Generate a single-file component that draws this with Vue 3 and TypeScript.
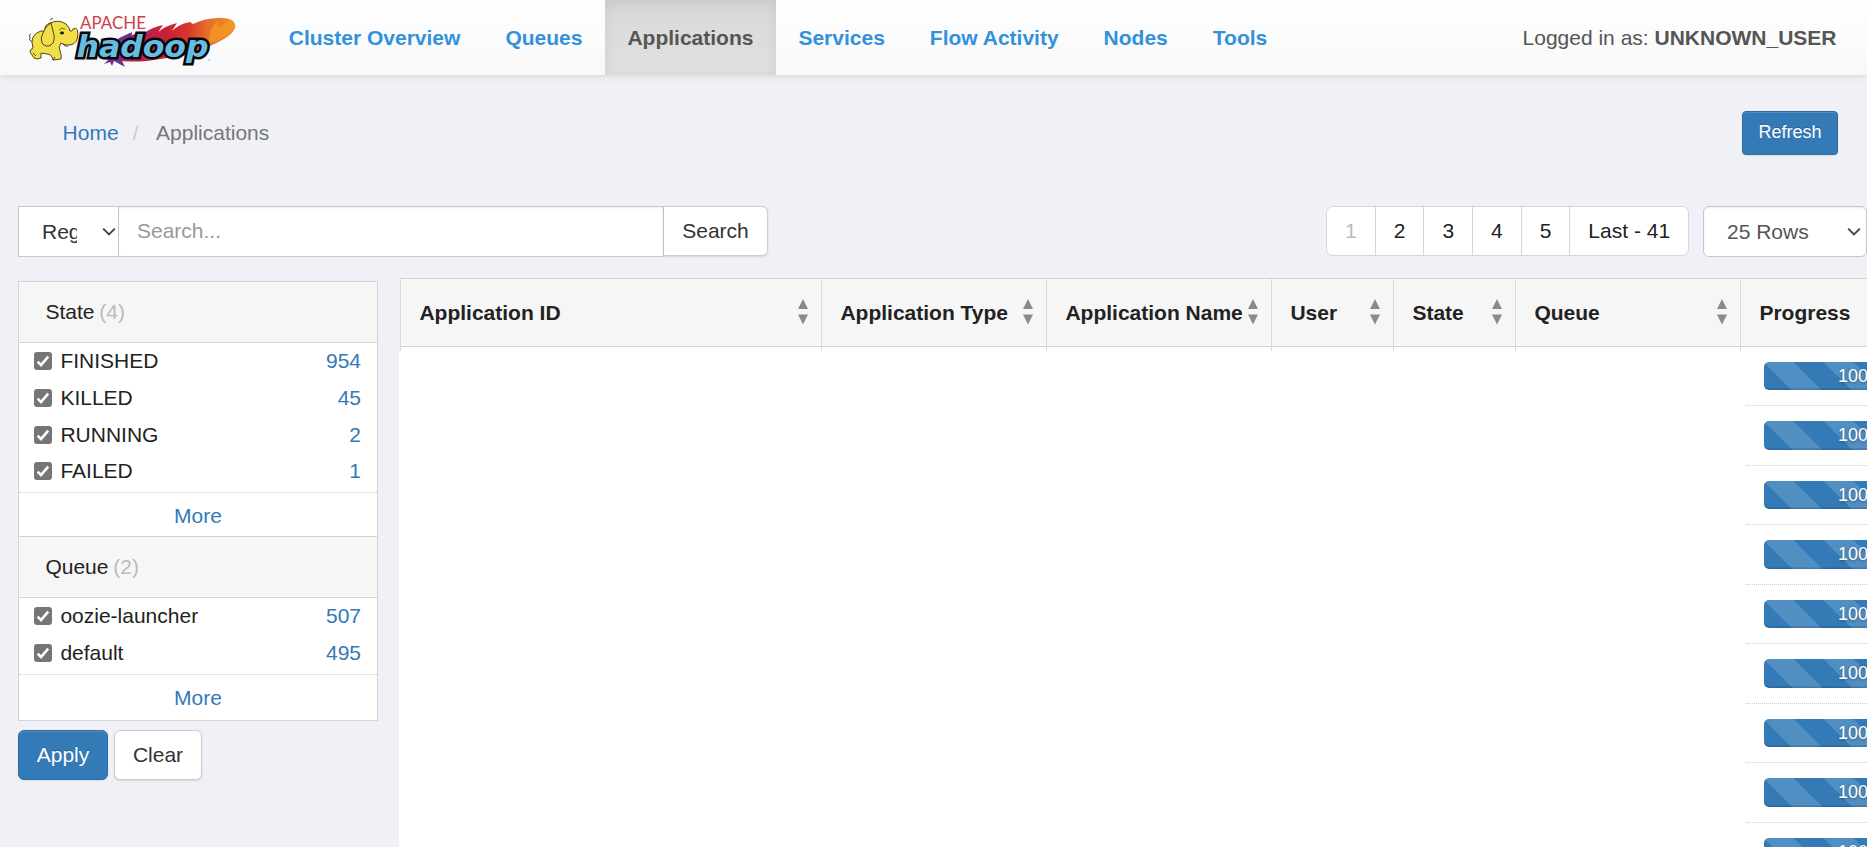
<script setup lang="ts">
interface FilterItem {
  label: string
  count: number
}
interface FilterGroup {
  title: string
  items: FilterItem[]
}
interface Column {
  title: string
  cls: string
}

const navItems: string[] = ['Cluster Overview', 'Queues', 'Applications', 'Services', 'Flow Activity', 'Nodes', 'Tools']
const activeNav = 'Applications'

const pages: string[] = ['1', '2', '3', '4', '5', 'Last - 41']

const groups: FilterGroup[] = [
  {
    title: 'State',
    items: [
      { label: 'FINISHED', count: 954 },
      { label: 'KILLED', count: 45 },
      { label: 'RUNNING', count: 2 },
      { label: 'FAILED', count: 1 },
    ],
  },
  {
    title: 'Queue',
    items: [
      { label: 'oozie-launcher', count: 507 },
      { label: 'default', count: 495 },
    ],
  },
]

const columns: Column[] = [
  { title: 'Application ID', cls: 'wide' },
  { title: 'Application Type', cls: 'mid' },
  { title: 'Application Name', cls: 'mid' },
  { title: 'User', cls: 'slim' },
  { title: 'State', cls: 'slim' },
  { title: 'Queue', cls: 'mid' },
  { title: 'Progress', cls: 'mid' },
]

const progress: number[] = Array.from({ length: 9 }, () => 100)
</script>

<template>
  <div class="page">
    <header class="navbar">
      <svg class="logo" viewBox="0 0 220 60" width="220" height="60">
        <defs>
          <linearGradient id="feather" x1="0" x2="1" y1="0" y2="0">
            <stop offset="0" stop-color="#6d2a8c" />
            <stop offset="0.2" stop-color="#b32063" />
            <stop offset="0.5" stop-color="#c92038" />
            <stop offset="0.66" stop-color="#d6382f" />
            <stop offset="0.78" stop-color="#e66a2a" />
            <stop offset="1" stop-color="#f09022" />
          </linearGradient>
        </defs>
        <path
          d="M72 47 Q92 52 120 50 L160 44 Q190 33 200 26 Q210 19 208 13 Q206 7 195 7 Q180 6 166 13 L163 11 Q152 13 145 20 L150 12 Q138 15 131 21 L136 14 Q124 17 119 21 L104 24 Z"
          fill="url(#feather)"
        />
        <path d="M191 9 L184 18 L181 33 Q198 28 206 19 Q210 10 203 9 L191 17 Z" fill="#f39a24" opacity="0.75" />
        <path d="M105 21 L92 27 L88 34 L104 28 Z M84 46 L77 53 L83 51 L85 55 L87 50 L98 56 L93 46 Z" fill="#71308f" />
        <text class="logo-apache" x="53" y="18.3" textLength="66" lengthAdjust="spacingAndGlyphs">APACHE</text>
        <text class="logo-hadoop" x="49.5" y="46.2" textLength="132" lengthAdjust="spacingAndGlyphs">hadoop</text>
        <path d="M181 48.8 h2" stroke="#8fb8c9" stroke-width="1" />
        <g fill="#f1de48" stroke="#3b370f" stroke-width="0.9" stroke-linejoin="round">
          <path
            d="M5 31 Q5 23 14 20 L18 20 Q17 14 23 12 Q32 8 39 13 Q43 17 43 20 Q45 21 46 18 Q49 16 50.5 19 Q52 29 47 32.5 Q41 36 34 32 Q31 36 33 40 Q35 45 34 48 L26 49 Q25 43 20 43 L14 42 L14 47 Q10 49 7 47 L3 41 Q3 38 6 37 Z"
          />
          <path d="M24 12 Q18 15 16 22 Q13 27 15 32 Q19 37 24 34 Q28 31 27 24 Z" />
          <path d="M5 31 Q1 29 3 26 Q1 24 4 23" fill="none" />
          <path d="M6 42 L9 45 M26 49 L28 46 M23 9 L26 7 M36 33 Q38 36 41 35" fill="none" />
        </g>
        <ellipse cx="35" cy="22" rx="2" ry="1.4" fill="#17170d" />
        <path d="M32 19 Q34 16 38 18" fill="none" stroke="#5a5417" stroke-width="0.8" />
      </svg>
      <nav class="menu">
        <a v-for="item in navItems" :key="item" :class="{ active: item === activeNav }">{{ item }}</a>
      </nav>
      <div class="user">Logged in as: <b>UNKNOWN_USER</b></div>
    </header>

    <div class="crumb-row">
      <div class="crumbs">
        <a class="link">Home</a><span class="slash">/</span><span class="here">Applications</span>
      </div>
      <button class="btn primary small">Refresh</button>
    </div>

    <div class="toolbar">
      <div class="select regex">
        <span class="value">Regex</span>
        <svg width="14" height="10" viewBox="0 0 14 10"><path d="M1.2 1.6 L7 7.4 L12.8 1.6" /></svg>
      </div>
      <div class="search-field">Search...</div>
      <button class="btn search-btn">Search</button>
      <div class="pager">
        <span v-for="(p, i) in pages" :key="p" :class="{ disabled: i === 0, last: i === pages.length - 1 }">{{ p }}</span>
      </div>
      <div class="select rows">
        <span class="value">25 Rows</span>
        <svg width="14" height="10" viewBox="0 0 14 10"><path d="M1.2 1.6 L7 7.4 L12.8 1.6" /></svg>
      </div>
    </div>

    <div class="body">
      <aside class="side">
        <div class="facets">
          <section v-for="g in groups" :key="g.title" class="facet">
            <h4>{{ g.title }} <span>({{ g.items.length }})</span></h4>
            <ul>
              <li v-for="it in g.items" :key="it.label">
                <svg class="check" width="18" height="18" viewBox="0 0 18 18">
                  <rect width="18" height="18" rx="3" />
                  <path d="M3.6 9.6 L7 13 L14.2 4.6" />
                </svg>
                <span>{{ it.label }}</span>
                <em>{{ it.count }}</em>
              </li>
            </ul>
            <a class="more">More</a>
          </section>
        </div>
        <div class="actions">
          <button class="btn primary apply">Apply</button>
          <button class="btn clear">Clear</button>
        </div>
      </aside>

      <main class="table">
        <div class="thead">
          <div v-for="c in columns" :key="c.title" class="th" :class="c.cls">
            <span>{{ c.title }}</span>
            <svg width="10" height="26" viewBox="0 0 10 26"><path d="M5 0 L10 10 H0 Z M0 15.5 H10 L5 25.5 Z" /></svg>
          </div>
        </div>
        <div class="ticks">
          <div v-for="c in columns" :key="c.title" :class="c.cls"></div>
        </div>
        <div class="rows-area">
          <div v-for="(p, i) in progress" :key="i" class="tr">
            <div class="bar" :style="{ width: p * 1.94 + 'px' }">{{ p }}%</div>
          </div>
        </div>
      </main>
    </div>
  </div>
</template>

<style>
body {
  margin: 0;
  overflow: hidden;
}
</style>

<style scoped>
.page {
  width: 1867px;
  height: 847px;
  overflow: hidden;
  background: #f0f1f7;
  color: #222;
  font: 21px/30px 'Liberation Sans', Arial, sans-serif;
  display: flex;
  flex-direction: column;
}
.page * {
  box-sizing: border-box;
}
.navbar {
  flex: none;
  height: 75px;
  display: flex;
  align-items: stretch;
  background: linear-gradient(#fff, #f8f8f8);
  box-shadow: 0 1px 7px rgba(0, 0, 0, 0.12);
}
.logo {
  flex: none;
  margin: 11px 19.3px 0 27px;
}
.logo-apache {
  font: 400 16.8px Lato, sans-serif;
  fill: #cc3f47;
}
.logo-hadoop {
  font: italic bold 31px 'DejaVu Sans', sans-serif;
  fill: #67bce0;
  stroke: #05070a;
  stroke-width: 5px;
  stroke-linejoin: miter;
  stroke-miterlimit: 3;
  paint-order: stroke;
}
.menu {
  display: flex;
  flex: 1;
}
.menu a {
  padding: 22.5px;
  font-weight: bold;
  color: #3191dc;
  white-space: nowrap;
}
.menu .active {
  color: #555;
  background: linear-gradient(#d9d9d9, #e0e0e0);
  box-shadow: inset 0 4px 13px rgba(0, 0, 0, 0.08);
}
.user {
  padding: 22.5px 30.5px 0 0;
  color: #555;
}
.crumb-row {
  flex: none;
  height: 131px;
  padding: 36px 29px 0 62.6px;
  display: flex;
  justify-content: space-between;
  align-items: flex-start;
}
.crumbs {
  display: flex;
  padding-top: 7px;
}
.link {
  color: #337ab7;
}
.slash {
  color: #ccc;
  padding: 0 17.6px 0 14px;
}
.here {
  color: #777;
}
.btn {
  font: 21px/30px 'Liberation Sans', Arial, sans-serif;
  height: 50px;
  padding: 0;
  color: #333;
  background: #fff;
  border: 1px solid #ccc;
  border-radius: 6px;
  box-shadow: 0 1px 2px rgba(0, 0, 0, 0.12);
}
.btn.primary {
  color: #fff;
  background: #337ab7;
  border-color: #2e6da4;
  box-shadow: inset 0 1px 0 rgba(255, 255, 255, 0.15), 0 1px 2px rgba(0, 0, 0, 0.08);
  text-shadow: 0 -1px 0 rgba(0, 0, 0, 0.2);
}
.btn.small {
  font-size: 18px;
  height: 44px;
  width: 96px;
  padding: 0 0 2px;
  border-radius: 4px;
}
.apply {
  width: 90px;
}
.clear {
  width: 88px;
}
.toolbar {
  flex: none;
  display: flex;
  height: 51px;
  padding-left: 18px;
}
.select {
  display: flex;
  align-items: center;
  justify-content: space-between;
  flex: none;
  height: 51px;
  background: #fff;
  border: 1px solid #c8c8cc;
}
.select svg {
  fill: none;
  stroke: #444;
  stroke-width: 2;
}
.select .value {
  overflow: hidden;
}
.regex {
  width: 101px;
  padding: 0 2px 0 23px;
}
.regex .value {
  width: 35px;
  color: #333;
}
.search-field {
  width: 545px;
  height: 51px;
  padding: 9px 18px;
  color: #999;
  background: #fff;
  border: solid #c8c8cc;
  border-width: 1px 1px 1px 0;
  box-shadow: inset 0 1px 2px rgba(0, 0, 0, 0.08);
}
.btn.search-btn {
  width: 104px;
  border-left: 0;
  border-radius: 0 6px 6px 0;
}
.pager {
  display: flex;
  margin-left: 558px;
  width: 363px;
  height: 50px;
  background: #fff;
  border: 1px solid #d6d6da;
  border-radius: 7px;
}
.pager span {
  width: 48.7px;
  padding-top: 9px;
  text-align: center;
  border-right: 1px solid #d6d6da;
}
.pager .disabled {
  color: #bbb;
}
.pager .last {
  flex: 1;
  border: 0;
  white-space: nowrap;
}
.rows {
  width: 164px;
  margin-left: 14px;
  padding: 0 5px 0 23px;
  border-radius: 6px;
  color: #555;
  box-shadow: inset 0 1px 2px rgba(0, 0, 0, 0.08);
}
.body {
  flex: 1;
  min-height: 0;
  display: flex;
  align-items: flex-start;
}
.side {
  flex: none;
  width: 360px;
  margin: 24px 21px 0 18px;
}
.facets {
  background: #fff;
  border: solid #d4d4d5;
  border-width: 0 1px 1px;
}
.facet h4 {
  margin: 0;
  height: 62px;
  padding: 15px 26.4px 0;
  font: inherit;
  background: #f6f6f6;
  border: solid #d4d4d5;
  border-width: 1px 0;
}
.facet h4 span {
  color: #bbb;
  margin-left: -1px;
}
.facet ul {
  margin: 0;
  padding: 0 16px 2.4px 15px;
  list-style: none;
}
.facet li {
  display: flex;
  align-items: center;
  height: 36.7px;
}
.check {
  margin-right: 8.4px;
}
.check rect {
  fill: #767676;
}
.check path {
  fill: none;
  stroke: #fff;
  stroke-width: 2.6;
}
.facet li em {
  margin-left: auto;
  font-style: normal;
  color: #337ab7;
}
.more {
  display: block;
  height: 43.8px;
  padding-top: 8px;
  border-top: 1px dotted #ccc;
  text-align: center;
  color: #337ab7;
}
.facet:last-child .more {
  height: 46px;
}
.actions {
  display: flex;
  gap: 6px;
  padding-top: 9.4px;
}
.table {
  flex: 1;
  min-width: 0;
  margin-top: 21px;
  overflow: hidden;
}
.thead,
.ticks {
  display: flex;
  width: 1566px;
  margin-left: 1px;
}
.thead {
  height: 69px;
  background: #f6f6f6;
  border: solid #d4d4d5;
  border-width: 1px 0;
}
.th {
  display: flex;
  justify-content: space-between;
  padding: 19px 12.6px 0 18.4px;
  font-weight: bold;
  white-space: nowrap;
}
.th svg {
  flex: none;
  margin-top: 1px;
  fill: #8a8a8a;
}
.wide,
.mid,
.slim {
  flex: none;
  border-left: 1px solid #d9d9da;
}
.wide {
  width: 421px;
}
.mid {
  width: 225px;
}
.slim {
  width: 122px;
}
.ticks {
  height: 4px;
  background: #fff;
}
.rows-area {
  height: 500px;
  background: #fff;
}
.tr {
  margin-left: 1347px;
  height: 59.5px;
  padding: 15px 0 0 18px;
  border-bottom: 1px dotted #ccc;
}
.tr:first-child {
  height: 55px;
  padding-top: 10.5px;
}
.bar {
  height: 28.5px;
  border-radius: 5px;
  color: #fff;
  font-size: 18px;
  line-height: 28px;
  text-align: center;
  text-shadow: 0 1px 3px rgba(0, 0, 0, 0.35);
  background: linear-gradient(
      45deg,
      rgba(255, 255, 255, 0.15) 25%,
      transparent 25%,
      transparent 50%,
      rgba(255, 255, 255, 0.15) 50%,
      rgba(255, 255, 255, 0.15) 75%,
      transparent 75%
    )
    0 0 / 60px 60px #337ab7;
  box-shadow: inset 0 -1.5px 0 rgba(0, 0, 0, 0.15);
}
</style>
